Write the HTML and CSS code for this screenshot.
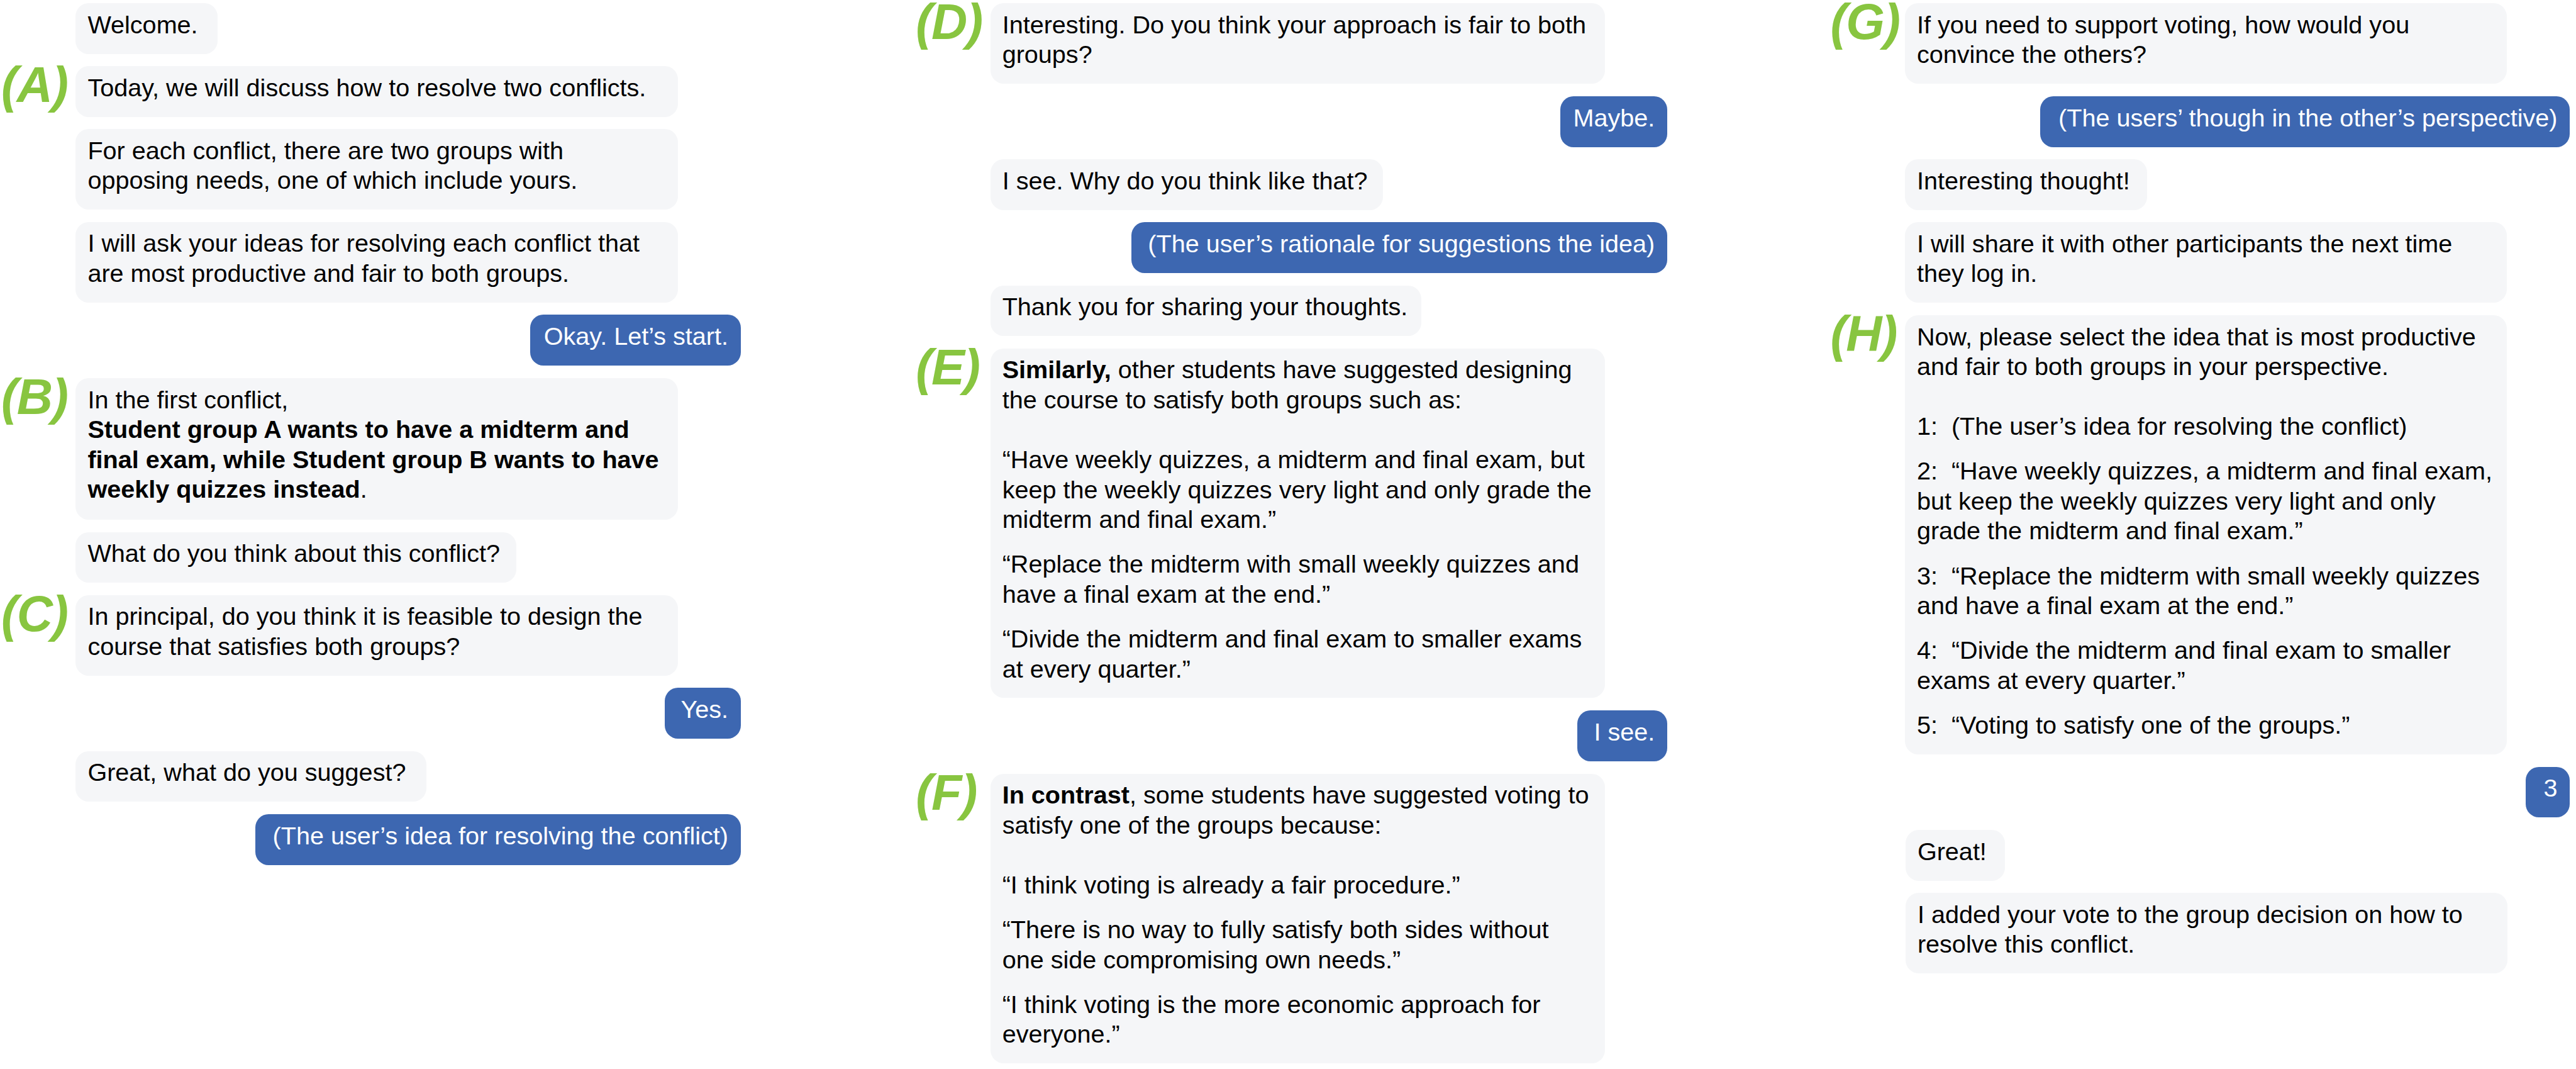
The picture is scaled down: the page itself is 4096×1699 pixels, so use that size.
FILE: index.html
```
<!DOCTYPE html>
<html lang="en">
    <head>
    <meta charset="UTF-8">
    <meta name="viewport" content="width=device-width, initial-scale=1.0">
    <title>Conflict resolution chat</title>
    <link rel="stylesheet" href="styles.css">
    </head>
    <body>
        <main class="conversation">

            <!-- First part: introduction and first conflict -->
            <section class="column">
                <div class="row"><span class="label"></span><div class="bot welcome">Welcome.</div></div>
                <div class="row"><span class="label">(A)</span><div class="bot">Today, we will discuss how to resolve two conflicts.</div></div>
                <div class="row"><span class="label"></span><div class="bot">For each conflict, there are two groups with<br>opposing needs, one of which include yours.</div></div>
                <div class="row"><span class="label"></span><div class="bot">I will ask your ideas for resolving each conflict that<br>are most productive and fair to both groups.</div></div>
                <div class="user okay">Okay. Let’s start.</div>
                <div class="row"><span class="label">(B)</span><div class="bot conflict">In the first conflict,<br><b>Student group A wants to have a midterm and<br>final exam, while Student group B wants to have<br>weekly quizzes instead</b>.</div></div>
                <div class="row"><span class="label"></span><div class="bot think">What do you think about this conflict?</div></div>
                <div class="row"><span class="label">(C)</span><div class="bot">In principal, do you think it is feasible to design the<br>course that satisfies both groups?</div></div>
                <div class="user yes">Yes.</div>
                <div class="row"><span class="label"></span><div class="bot suggest">Great, what do you suggest?</div></div>
                <div class="user idea">(The user’s idea for resolving the conflict)</div>
            </section>

            <!-- Second part: rationale and opinions of other students -->
            <section class="column middle">
                <div class="row"><span class="label">(D)</span><div class="bot">Interesting. Do you think your approach is fair to both<br>groups?</div></div>
                <div class="user maybe">Maybe.</div>
                <div class="row"><span class="label"></span><div class="bot why">I see. Why do you think like that?</div></div>
                <div class="user rationale">(The user’s rationale for suggestions the idea)</div>
                <div class="row"><span class="label"></span><div class="bot thanks">Thank you for sharing your thoughts.</div></div>
                <div class="row"><span class="label">(E)</span>
                    <div class="bot">
                        <p class="intro"><b>Similarly,</b> other students have suggested designing<br>the course to satisfy both groups such as:</p>
                        <p>“Have weekly quizzes, a midterm and final exam, but<br>keep the weekly quizzes very light and only grade the<br>midterm and final exam.”</p>
                        <p>“Replace the midterm with small weekly quizzes and<br>have a final exam at the end.”</p>
                        <p>“Divide the midterm and final exam to smaller exams<br>at every quarter.”</p>
                    </div>
                </div>
                <div class="user see">I see.</div>
                <div class="row"><span class="label">(F)</span>
                    <div class="bot">
                        <p class="intro"><b>In contrast</b>, some students have suggested voting to<br>satisfy one of the groups because:</p>
                        <p>“I think voting is already a fair procedure.”</p>
                        <p>“There is no way to fully satisfy both sides without<br>one side compromising own needs.”</p>
                        <p>“I think voting is the more economic approach for<br>everyone.”</p>
                    </div>
                </div>
            </section>

            <!-- Third part: perspective taking and vote -->
            <section class="column">
                <div class="row"><span class="label">(G)</span><div class="bot">If you need to support voting, how would you<br>convince the others?</div></div>
                <div class="user perspective">(The users’ though in the other’s perspective)</div>
                <div class="row"><span class="label"></span><div class="bot thought">Interesting thought!</div></div>
                <div class="row"><span class="label"></span><div class="bot">I will share it with other participants the next time<br>they log in.</div></div>
                <div class="row"><span class="label">(H)</span>
                    <div class="bot">
                        <p class="intro">Now, please select the idea that is most productive<br>and fair to both groups in your perspective.</p>
                        <p>1:&nbsp; (The user’s idea for resolving the conflict)</p>
                        <p>2:&nbsp; “Have weekly quizzes, a midterm and final exam,<br>but keep the weekly quizzes very light and only<br>grade the midterm and final exam.”</p>
                        <p>3:&nbsp; “Replace the midterm with small weekly quizzes<br>and have a final exam at the end.”</p>
                        <p>4:&nbsp; “Divide the midterm and final exam to smaller<br>exams at every quarter.”</p>
                        <p>5:&nbsp; “Voting to satisfy one of the groups.”</p>
                    </div>
                </div>
                <div class="user vote">3</div>
                <div class="row last"><span class="label"></span><div class="bot great">Great!</div></div>
                <div class="row last"><span class="label"></span><div class="bot">I added your vote to the group decision on how to<br>resolve this conflict.</div></div>
            </section>

        </main>
    </body>
</html>
```

FILE: styles.css
```
body {
    font-family: Arial, "Liberation Sans", sans-serif;
    font-size: 39.6px;
    line-height: 47.52px;
    background-color: #ffffff;
    color: #000000;
    margin: 0;
}
.conversation {
    display: flex;
    justify-content: space-between;
    align-items: flex-start;
    box-sizing: border-box;
    width: 4096px;
    height: 1699px;
    padding: 5px 10px 0 0;
}

/* Columns */
.column {
    display: flex;
    flex-direction: column;
    gap: 19.6px;
    width: 1177.5px;
}
.middle {
    width: 1196.5px;
    margin-left: 19px;
}
.row {
    display: flex;
    align-items: flex-start;
}
.row.last {
    margin-left: 1px;
}

/* Green letters beside the messages */
.label {
    flex: none;
    box-sizing: border-box;
    width: 120.4px;
    padding-left: 2px;
    font-size: 79.2px;
    line-height: 60.4px;
    letter-spacing: -1.5px;
    font-weight: bold;
    font-style: italic;
    color: #88c540;
    white-space: nowrap;
}

/* Messages */
.bot, .user {
    box-sizing: border-box;
    border-radius: 21px;
    white-space: nowrap;
}
.bot {
    width: 957.6px;
    padding: 10.7px 0 22.3px 19px;
    background-color: #f5f6f8;
}
.middle .bot {
    width: 977.8px;
}
.user {
    align-self: flex-end;
    padding: 10.9px 19.5px 22.5px 0;
    text-align: right;
    background-color: #3d67b1;
    color: #ffffff;
}
.bot p {
    margin: 23.76px 0 0;
}
.bot .intro {
    margin: 0 0 47.52px;
}
.bot .intro + p {
    margin-top: 0;
}

/* Widths of the short messages */
.bot.welcome { width: 226px; }
.bot.conflict { padding-bottom: 24.3px; }
.bot.think { width: 701px; }
.bot.suggest { width: 557.6px; }
.middle .why { width: 624.5px; }
.middle .thanks { width: 685.8px; }
.bot.thought { width: 385px; }
.bot.great { width: 158px; }

.okay { width: 334.7px; }
.yes { width: 121px; }
.idea { width: 772px; }
.maybe { width: 169.5px; }
.rationale { width: 852px; }
.see { width: 143.2px; }
.perspective { width: 842px; }
.vote { width: 70.5px; }
```
